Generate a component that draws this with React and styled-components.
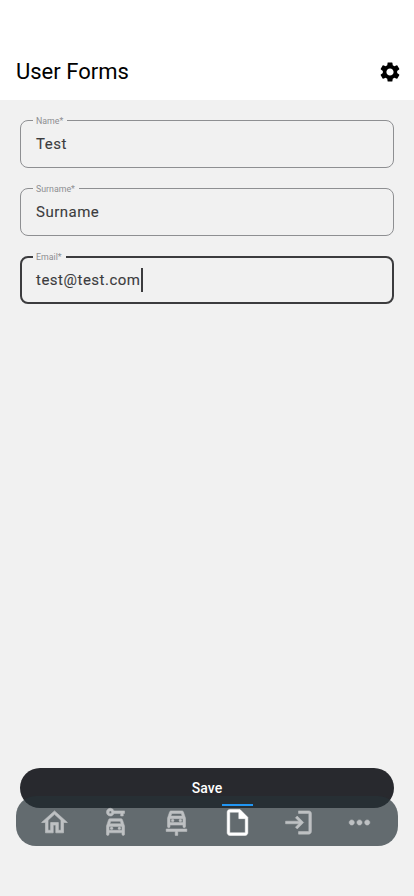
import React from "react";
import styled, { createGlobalStyle, css } from "styled-components";
import {
  MdSettings,
  MdOutlineHome,
  MdOutlineCarRental,
  MdOutlineCarRepair,
  MdOutlineInsertDriveFile,
  MdLogin,
  MdMoreHoriz,
} from "react-icons/md";

const GlobalStyle = createGlobalStyle`
  * { box-sizing: border-box; }
  body { margin: 0; background: #f1f1f1; font-family: Roboto, sans-serif; }
`;

const Screen = styled.div`
  display: flex;
  flex-direction: column;
  height: 896px;
  background: #f1f1f1;
`;

const Header = styled.header`
  display: flex;
  align-items: center;
  justify-content: space-between;
  height: 100px;
  padding: 44px 12px 0 16px;
  background: #fff;
  color: #000;
`;

const Title = styled.h1`
  margin: 0;
  font-size: 22px;
  line-height: 28px;
  font-weight: 400;
`;

const Form = styled.form`
  flex: 1;
  display: flex;
  flex-direction: column;
  gap: 12px;
  padding: 16px 20px 0;
`;

const Field = styled.fieldset`
  height: 52px;
  min-width: 0;
  margin: 0 0 4px;
  padding: 0 0 0 15px;
  border: 1px solid #8e8f92;
  border-radius: 8px;
  ${(p) =>
    p.$focused &&
    css`
      border: 2px solid #3c3c3e;
      padding-left: 14px;
    `}
`;

const Label = styled.legend`
  height: 9px;
  margin-left: -3px;
  padding: 0 4px 0 3px;
  font-size: 8.8px;
  line-height: 11px;
  color: #8e8f92;
`;

const Value = styled.div`
  display: flex;
  align-items: center;
  height: 38px;
  font-size: 15px;
  letter-spacing: 0.5px;
  color: #3c3c3e;
  -webkit-text-stroke: 0.1px currentColor;
`;

const Caret = styled.span`
  width: 2px;
  height: 24px;
  background: #3c3c3e;
`;

const Footer = styled.footer`
  height: 128px;
  padding: 0 16px;
`;

const SaveButton = styled.button`
  display: block;
  width: calc(100% - 8px);
  height: 40px;
  margin: 0 4px;
  padding: 0;
  border: 0;
  border-radius: 20px;
  background: #28292e;
  color: #fff;
  font: 500 14px/40px Roboto, sans-serif;
`;

const TabBar = styled.nav`
  position: relative;
  display: flex;
  height: 50px;
  margin-top: -12px;
  padding: 0 8px;
  border-radius: 20px;
  background: rgba(38, 50, 56, 0.7);
`;

const Tab = styled.a`
  position: relative;
  flex: 1;
  display: flex;
  justify-content: center;
  padding-top: 11px;
  color: ${(p) => (p.$active ? "#fff" : "#bec1c3")};

  svg,
  svg path {
    stroke-width: ${(p) => p.$stroke}px;
  }
  svg path:not([fill="none"]) {
    stroke: currentColor;
  }
  svg path[fill="none"] {
    stroke: none;
  }
`;

const Indicator = styled.span`
  position: absolute;
  top: 8px;
  left: calc(50% - 15.5px);
  width: 31px;
  height: 2px;
  background: #2196f3;
`;

const fields = [
  { label: "Name*", value: "Test" },
  { label: "Surname*", value: "Surname" },
  { label: "Email*", value: "test@test.com", focused: true },
];

const tabs = [
  { Icon: MdOutlineHome, stroke: 0.5 },
  { Icon: MdOutlineCarRental, stroke: 0.4 },
  { Icon: MdOutlineCarRepair, stroke: 0.4 },
  { Icon: MdOutlineInsertDriveFile, stroke: 0.4, active: true },
  { Icon: MdLogin, stroke: 0.4 },
  { Icon: MdMoreHoriz, stroke: 0.4 },
];

export default function App() {
  return (
    <Screen>
      <GlobalStyle />
      <Header>
        <Title>User Forms</Title>
        <MdSettings size={24} />
      </Header>
      <Form>
        {fields.map(({ label, value, focused }) => (
          <Field key={label} $focused={focused}>
            <Label>{label}</Label>
            <Value>
              {value}
              {focused && <Caret />}
            </Value>
          </Field>
        ))}
      </Form>
      <Footer>
        <SaveButton type="button">Save</SaveButton>
        <TabBar>
          {tabs.map(({ Icon, active, stroke }, i) => (
            <Tab key={i} $active={active} $stroke={stroke}>
              {active && <Indicator />}
              <Icon size={31} />
            </Tab>
          ))}
        </TabBar>
      </Footer>
    </Screen>
  );
}
